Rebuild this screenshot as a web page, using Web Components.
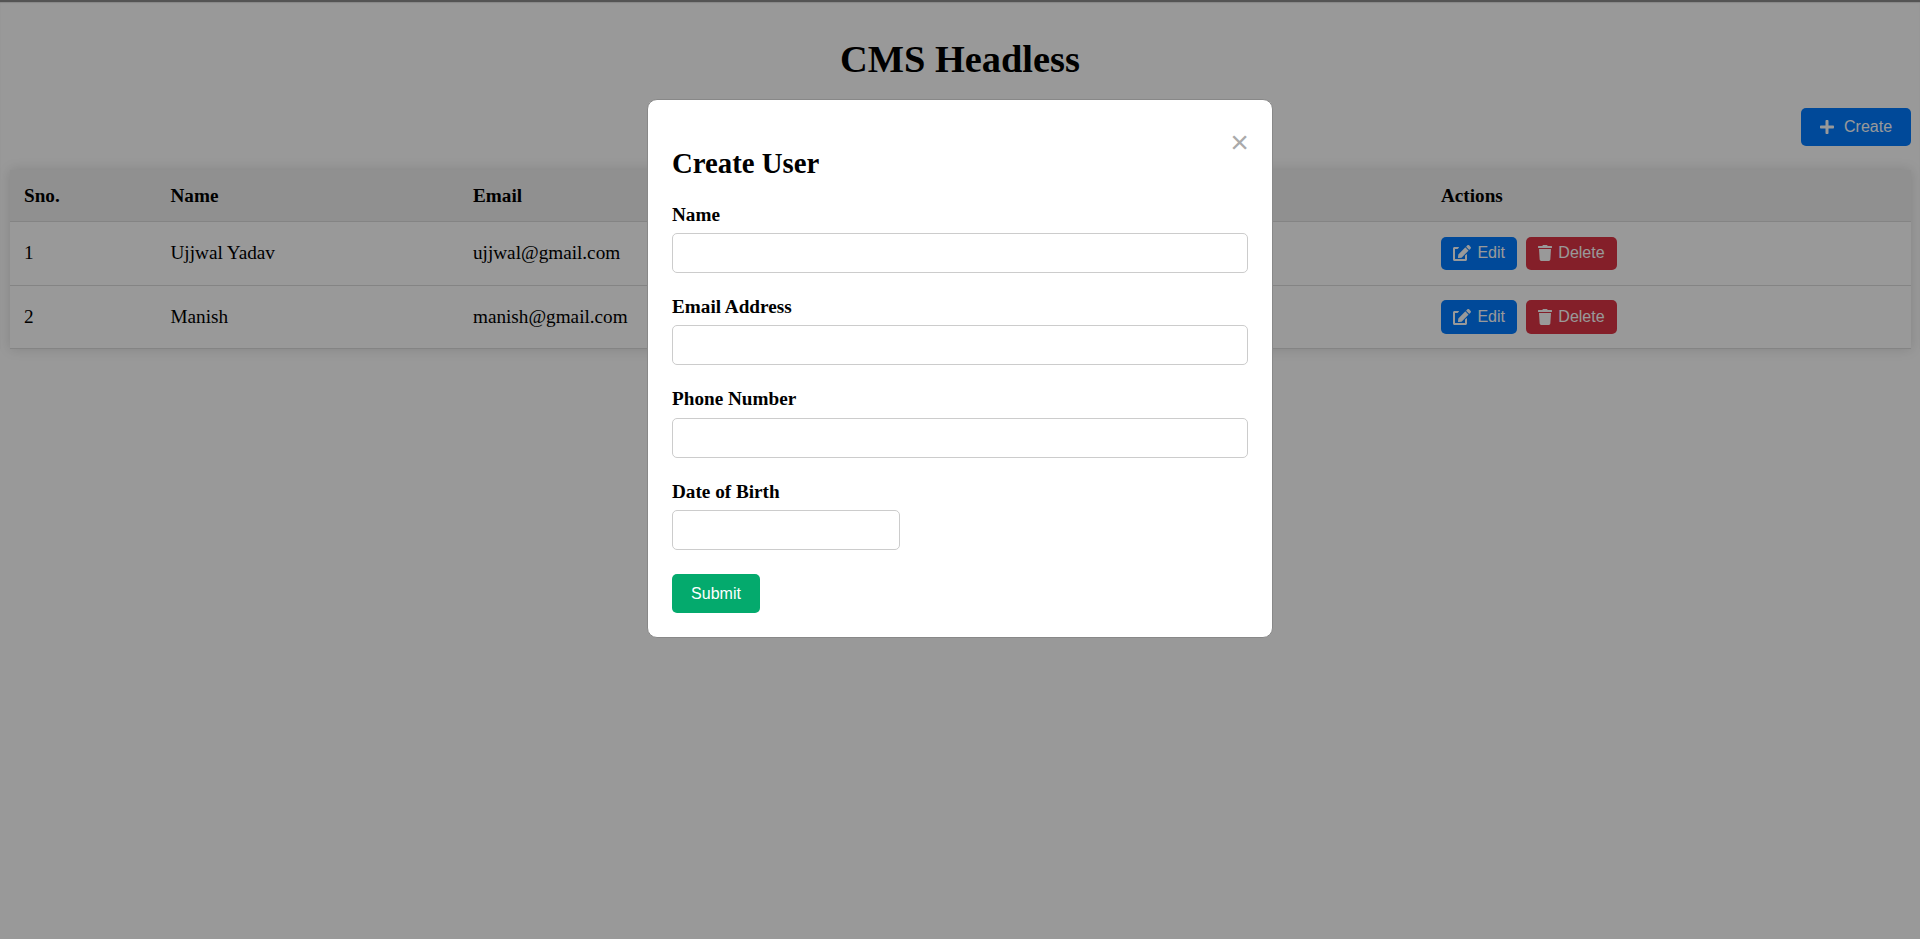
<!DOCTYPE html>
<html lang="en">
<head>
<meta charset="utf-8">
<title>CMS Headless</title>
<style>
    html, body { margin: 0; padding: 0; height: 100%; background: #fff; }
    body { font-family: "Liberation Serif", "Times New Roman", serif; color: #000; overflow: hidden; }
</style>
</head>
<body>
<cms-app>
    <user-table>
        <user-row sno="1" name="Ujjwal Yadav" email="ujjwal@gmail.com"></user-row>
        <user-row sno="2" name="Manish" email="manish@gmail.com"></user-row>
    </user-table>
</cms-app>
<user-modal heading="Create User">
    <form-field label="Name"></form-field>
    <form-field label="Email Address"></form-field>
    <form-field label="Phone Number"></form-field>
    <form-field label="Date of Birth" short></form-field>
</user-modal>

<script>
const ICONS = {
    plus: ['0 0 448 512', 14, 'M416 208H272V64c0-17.67-14.33-32-32-32h-32c-17.67 0-32 14.33-32 32v144H32c-17.67 0-32 14.33-32 32v32c0 17.67 14.33 32 32 32h144v144c0 17.67 14.33 32 32 32h32c17.67 0 32-14.33 32-32V304h144c17.67 0 32-14.33 32-32v-32c0-17.67-14.33-32-32-32z'],
    edit: ['0 0 576 512', 18, 'M402.6 83.2l90.2 90.2c3.8 3.8 3.8 10 0 13.8L274.4 405.6l-92.8 10.3c-12.4 1.4-22.9-9.1-21.5-21.5l10.3-92.8L388.8 83.2c3.8-3.8 10-3.8 13.8 0zm162-22.9l-48.8-48.8c-15.2-15.2-39.9-15.2-55.2 0l-35.4 35.4c-3.8 3.8-3.8 10 0 13.8l90.2 90.2c3.8 3.8 10 3.8 13.8 0l35.4-35.4c15.2-15.3 15.2-40 0-55.2zM384 346.2V448H64V128h73.1c3.2 0 6.2-1.3 8.5-3.5l40-40c7.6-7.6 2.2-20.5-8.5-20.5H48C21.5 64 0 85.5 0 112v352c0 26.5 21.5 48 48 48h352c26.5 0 48-21.5 48-48V306.2c0-10.7-12.9-16-20.5-8.5l-40 40c-2.2 2.3-3.5 5.3-3.5 8.5z'],
    trash: ['0 0 448 512', 14, 'M432 32H312l-9.4-18.7A24 24 0 0 0 281.1 0H166.8a23.72 23.72 0 0 0-21.4 13.3L136 32H16A16 16 0 0 0 0 48v32a16 16 0 0 0 16 16h416a16 16 0 0 0 16-16V48a16 16 0 0 0-16-16zM53.2 467a48 48 0 0 0 47.9 45h245.8a48 48 0 0 0 47.9-45L416 128H32z']
};

class IconButton extends HTMLElement {
    constructor() {
        super();
        this.attachShadow({ mode: 'open' });
    }

    connectedCallback() {
        const icon = ICONS[this.getAttribute('icon')];
        this.shadowRoot.innerHTML = `
            <style>
                :host {
                    display: inline-flex;
                    align-items: center;
                    box-sizing: border-box;
                    height: 33.5px;
                    padding: 0 12px;
                    gap: 6.4px;
                    border-radius: 5px;
                    background: var(--btn-bg, #007bff);
                    color: #fff;
                    font: 16px "Liberation Sans", Arial, sans-serif;
                }
                svg { width: ${icon[1]}px; height: 16px; fill: currentColor; display: block; }
            </style>
            <svg viewBox="${icon[0]}"><path d="${icon[2]}"></path></svg>
            <slot></slot>
        `;
    }
}
customElements.define('icon-button', IconButton);

class CmsApp extends HTMLElement {
    constructor() {
        super();
        this.attachShadow({ mode: 'open' });
        this.shadowRoot.innerHTML = `
            <style>
                :host {
                    display: block;
                    border-top: 2px solid #8c8c8c;
                    box-shadow: inset 0 1px 1px rgba(0,0,0,0.12);
                }
                h1 {
                    margin: 0;
                    padding-top: 34px;
                    text-align: center;
                    font-size: 38.4px;
                    line-height: 46px;
                    font-weight: bold;
                }
                #toolbar {
                    display: flex;
                    justify-content: flex-end;
                    padding: 26px 9px 24px 0;
                }
                #create {
                    height: 38px;
                    width: 110px;
                    padding: 0 0 0 19px;
                    gap: 10px;
                }
                #main { padding: 0 9px 0 10px; }
            </style>
            <h1>CMS Headless</h1>
            <div id="toolbar"><icon-button id="create" icon="plus">Create</icon-button></div>
            <div id="main"><slot></slot></div>
        `;
    }
}
customElements.define('cms-app', CmsApp);

class UserTable extends HTMLElement {
    constructor() {
        super();
        this.attachShadow({ mode: 'open' });
        this.shadowRoot.innerHTML = `
            <style>
                :host {
                    display: block;
                    box-shadow: 0 0 12px rgba(0,0,0,0.14);
                    font-size: 19.2px;
                }
                #head {
                    display: grid;
                    grid-template-columns: 146.5px 302.5px 968px 1fr;
                    align-items: center;
                    box-sizing: border-box;
                    height: 52px;
                    padding-left: 14px;
                    background: #f0f0f0;
                    border-bottom: 1px solid #ddd;
                    font-weight: bold;
                }
            </style>
            <div id="head">
                <span>Sno.</span>
                <span>Name</span>
                <span>Email</span>
                <span>Actions</span>
            </div>
            <slot></slot>
        `;
    }
}
customElements.define('user-table', UserTable);

class UserRow extends HTMLElement {
    constructor() {
        super();
        this.attachShadow({ mode: 'open' });
    }

    connectedCallback() {
        this.shadowRoot.innerHTML = `
            <style>
                :host {
                    display: grid;
                    grid-template-columns: 146.5px 302.5px 968px 1fr;
                    align-items: center;
                    box-sizing: border-box;
                    height: 63.5px;
                    padding-left: 14px;
                    border-bottom: 1px solid #ddd;
                }
                #actions { display: flex; gap: 9px; }
                #delete { --btn-bg: #dc3545; }
            </style>
            <span>${this.getAttribute('sno')}</span>
            <span>${this.getAttribute('name')}</span>
            <span>${this.getAttribute('email')}</span>
            <div id="actions">
                <icon-button icon="edit">Edit</icon-button>
                <icon-button id="delete" icon="trash">Delete</icon-button>
            </div>
        `;
    }
}
customElements.define('user-row', UserRow);

class FormField extends HTMLElement {
    constructor() {
        super();
        this.attachShadow({ mode: 'open' });
    }

    connectedCallback() {
        const width = this.hasAttribute('short') ? '228px' : '100%';
        this.shadowRoot.innerHTML = `
            <style>
                :host { display: block; margin-bottom: 23px; }
                label {
                    display: block;
                    font-size: 19.2px;
                    font-weight: bold;
                    line-height: 22px;
                    margin-bottom: 7.4px;
                }
                input {
                    display: block;
                    box-sizing: border-box;
                    width: ${width};
                    height: 40px;
                    border: 1px solid #ccc;
                    border-radius: 5px;
                    background: #fff;
                    padding: 0 12px;
                    font-size: 16px;
                }
            </style>
            <label>${this.getAttribute('label')}</label>
            <input type="text">
        `;
    }
}
customElements.define('form-field', FormField);

class UserModal extends HTMLElement {
    constructor() {
        super();
        this.attachShadow({ mode: 'open' });
    }

    connectedCallback() {
        this.shadowRoot.innerHTML = `
            <style>
                :host {
                    position: fixed;
                    inset: 0;
                    display: flex;
                    justify-content: center;
                    align-items: flex-start;
                    background: rgba(0,0,0,0.4);
                    z-index: 10;
                }
                #modal {
                    position: relative;
                    box-sizing: border-box;
                    width: 626px;
                    margin-top: 99px;
                    padding: 24px;
                    background: #fff;
                    border: 1px solid #888;
                    border-radius: 10px;
                }
                #close {
                    position: absolute;
                    top: 17px;
                    right: 23px;
                    color: #aaa;
                    font: 32px/50px "Liberation Sans", Arial, sans-serif;
                }
                h2 {
                    margin: 23px 0 23.5px;
                    font-size: 28.8px;
                    line-height: 33px;
                    font-weight: bold;
                }
                #submit {
                    display: block;
                    box-sizing: border-box;
                    width: 88px;
                    height: 39px;
                    margin-top: 24px;
                    text-align: center;
                    border-radius: 5px;
                    background: #04aa6d;
                    color: #fff;
                    font: 16px/39px "Liberation Sans", Arial, sans-serif;
                }
                ::slotted(form-field:last-of-type) { margin-bottom: 0; }
            </style>
            <div id="modal">
                <span id="close">&times;</span>
                <h2>${this.getAttribute('heading')}</h2>
                <slot></slot>
                <div id="submit">Submit</div>
            </div>
        `;
    }
}
customElements.define('user-modal', UserModal);
</script>
</body>
</html>
